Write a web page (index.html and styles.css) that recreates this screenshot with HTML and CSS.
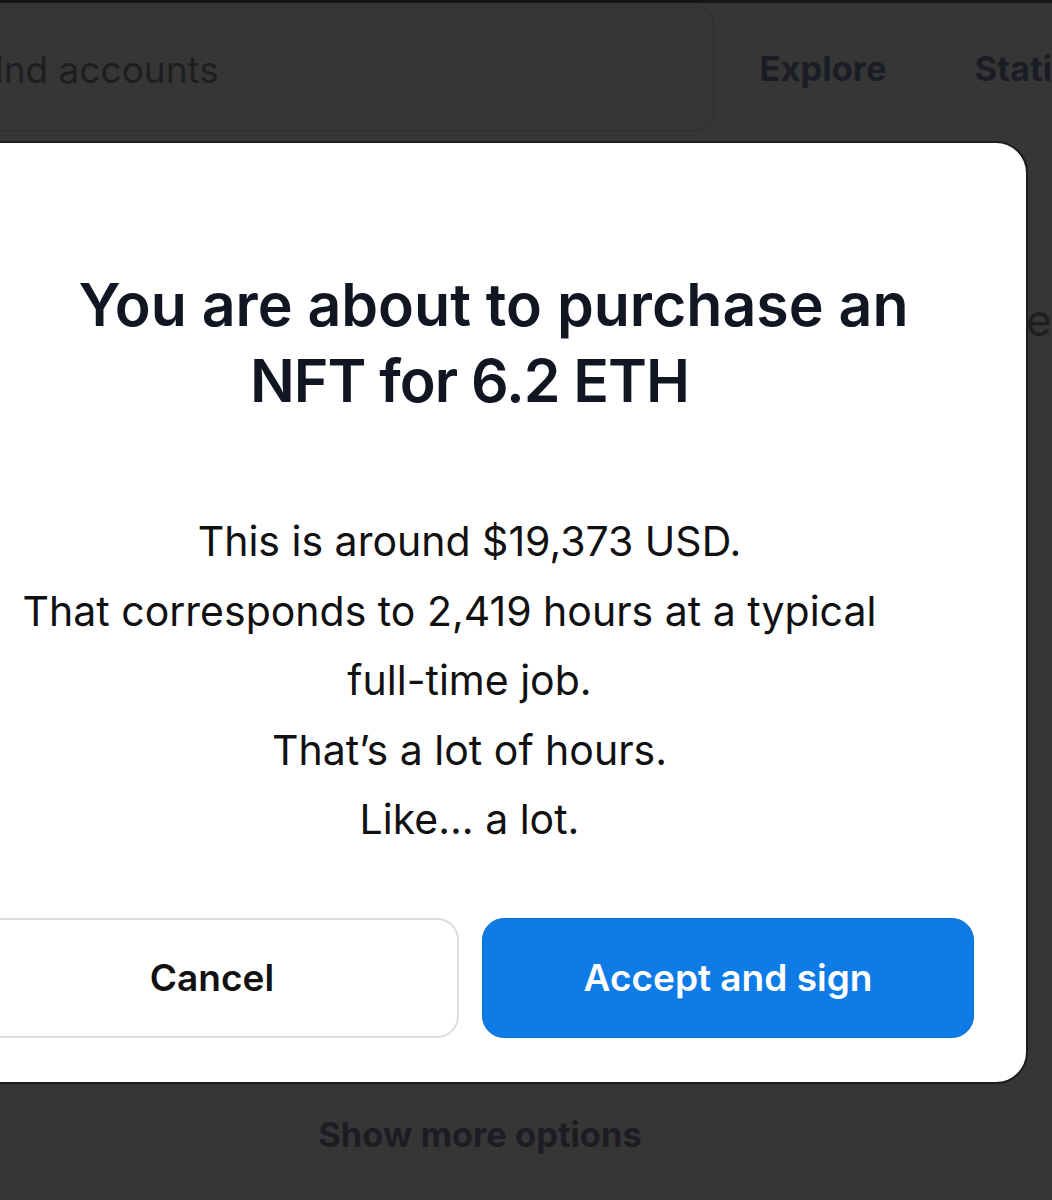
FILE: index.html
```html
<!DOCTYPE html>
<html>
<head>
<meta charset="utf-8">
<link rel="stylesheet" href="styles.css">
</head>
<body>
<div class="page">
  <div class="topline"></div>
  <header class="header">
    <div class="search"><span class="search-text">dnd accounts</span></div>
    <nav class="nav">
      <span class="nav-item">Explore</span>
      <span class="nav-item nav-stats">Stati</span>
    </nav>
  </header>
  <div class="bg-content">
    <p class="bg-line">e.</p>
  </div>
  <div class="bg-footer">
    <span class="more">Show more options</span>
  </div>

  <div class="modal">
    <h1 class="title"><span class="title-l1">You are about to purchase an</span><span class="title-l2">NFT for 6.2 ETH</span></h1>
    <div class="body">
      <p class="line">This is around $19,373 USD.</p>
      <p class="line line-wide">That corresponds to 2,419 hours at a typical</p>
      <p class="line">full-time job.</p>
      <p class="line">That’s a lot of hours.</p>
      <p class="line">Like... a lot.</p>
    </div>
    <div class="actions">
      <button class="btn btn-cancel">Cancel</button>
      <button class="btn btn-accept">Accept and sign</button>
    </div>
  </div>
</div>
</body>
</html>
```
FILE: styles.css
```css
html, body {
  margin: 0;
  padding: 0;
}
body {
  background: #363636;
  font-family: Inter, "Noto Sans", sans-serif;
  width: 1052px;
  height: 1200px;
  overflow: hidden;
}
.page {
  position: relative;
  width: 1052px;
  height: 1200px;
  overflow: hidden;
}
.topline {
  height: 3px;
  background: #161616;
}
.header {
  display: flex;
  align-items: center;
  height: 130px;
}
.search {
  margin-left: -40px;
  width: 758px;
  height: 124px;
  box-sizing: border-box;
  border: 1px solid #2f2f2f;
  border-radius: 16px;
  display: flex;
  align-items: center;
  padding-left: 20px;
  margin-top: 2px;
}
.search-text {
  font-size: 37px;
  color: #1e1e22;
  font-weight: 400;
  white-space: nowrap;
}
.nav {
  display: flex;
  gap: 88px;
  margin-left: 46px;
}
.nav-item {
  font-size: 34.5px;
  font-weight: 700;
  color: #1b1d24;
  white-space: nowrap;
}
.bg-content {
  display: flex;
  justify-content: flex-start;
  padding-left: 1026px;
  margin-top: 160px;
}
.bg-line {
  margin: 0;
  font-size: 44px;
  color: #1e1e22;
  white-space: nowrap;
}
.bg-footer {
  position: absolute;
  left: 0;
  top: 1114px;
  width: 960px;
  display: flex;
  justify-content: center;
}
.more {
  font-size: 34.5px;
  font-weight: 700;
  color: #1c1d22;
}
.modal {
  position: absolute;
  left: -89px;
  top: 141px;
  width: 1117px;
  height: 943px;
  box-sizing: border-box;
  background: #ffffff;
  border: 2px solid #1c1c1c;
  border-radius: 32px;
  display: flex;
  flex-direction: column;
  align-items: center;
  padding: 124px 52px 0 52px;
}
.title {
  margin: 0;
  font-size: 59px;
  line-height: 76px;
  font-weight: 600;
  color: #111622;
  text-align: center;
  display: flex;
  flex-direction: column;
  align-items: center;
}
.title-l1 {
  padding-left: 48px;
  white-space: nowrap;
}
.title-l2 {
  letter-spacing: -1px;
  white-space: nowrap;
}
.body {
  margin-top: 88px;
  display: flex;
  flex-direction: column;
  align-items: center;
}
.line {
  margin: 0;
  font-size: 41px;
  line-height: 69.5px;
  color: #111;
  white-space: nowrap;
}
.line-wide {
  padding-right: 40px;
}
.actions {
  margin-top: 63px;
  display: flex;
  gap: 23px;
  width: 100%;
}
.btn {
  flex: 1;
  height: 120px;
  border-radius: 22px;
  font-family: inherit;
  font-size: 37px;
  font-weight: 600;
}
.btn-cancel {
  background: #fff;
  border: 2px solid #dcdcdc;
  color: #111;
}
.btn-accept {
  background: #0f7be6;
  border: 1px solid #0c6fd0;
  color: #fff;
}
```
